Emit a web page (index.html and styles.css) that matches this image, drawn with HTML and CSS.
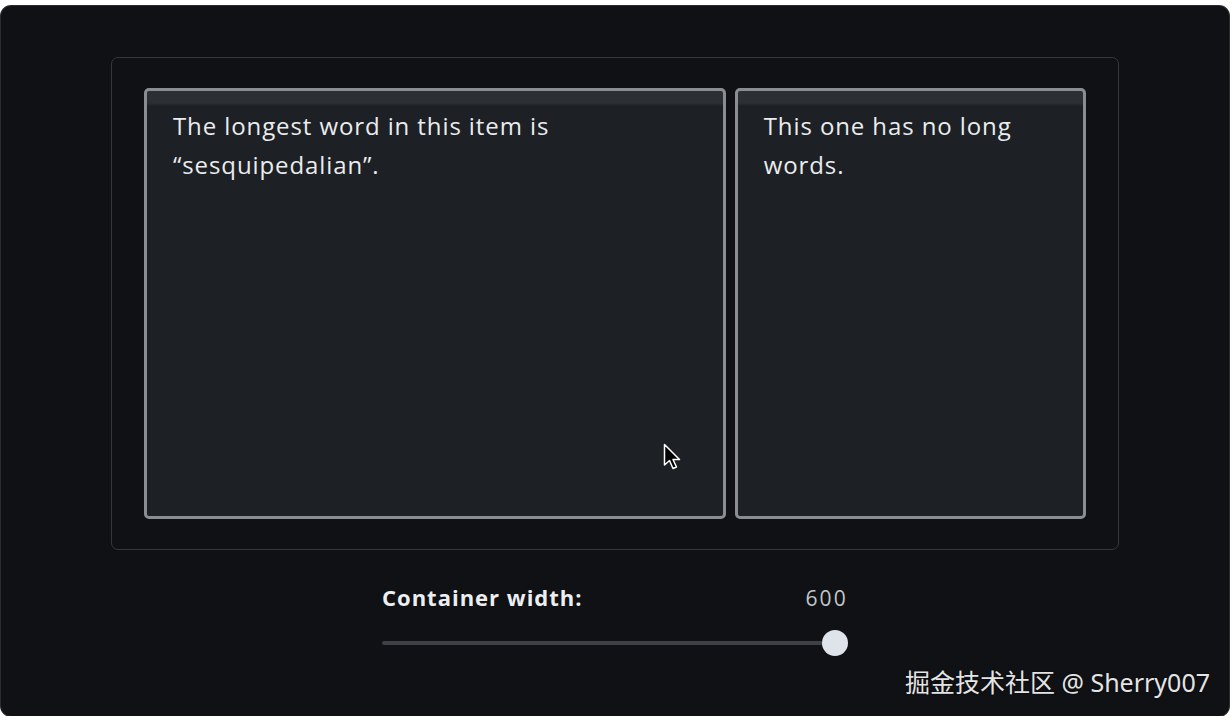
FILE: index.html
```html
<!DOCTYPE html>
<html lang="en">
<head>
    <meta charset="UTF-8">
    <meta name="viewport" content="width=device-width, initial-scale=1.0">
    <title>Container width demo</title>
    <link rel="stylesheet" href="styles.css">
</head>
<body>
    <div class="frame">
        <!-- Área de demonstração -->
        <div class="demo">
            <div class="item item-wide">
                <p>The longest word in this item is “sesquipedalian”.</p>
            </div>
            <div class="item item-narrow">
                <p>This one has no long words.</p>
            </div>
        </div>

        <div class="controls">
            <div class="control-head">
                <label for="width">Container width:</label>
                <span class="value">600</span>
            </div>
            <input type="range" id="width" min="200" max="600" value="600">
        </div>

        <svg class="cursor" width="20" height="30" viewBox="0 0 20 30">
            <path d="M1.5 1.5 L1.5 22 L6.5 17.5 L10 25.5 L13.5 24 L10 16.5 L16.5 16.5 Z" fill="#000" stroke="#fff" stroke-width="1.5" stroke-linejoin="round"/>
        </svg>

        <div class="watermark">掘金技术社区 @ Sherry007</div>
    </div>
</body>
</html>
```

FILE: styles.css
```css
body {
    margin: 0;
    background-color: #ffffff;
    font-family: "Open Sans", Lato, sans-serif;
}
.frame {
    position: relative;
    box-sizing: border-box;
    width: 1228px;
    height: 710px;
    margin: 6px 0 0 1px;
    padding-top: 51px;
    background-color: #0f1115;
    border-radius: 10px;
    box-shadow: 0 0 0 1px #2a2c30;
    display: flex;
    flex-direction: column;
    align-items: center;
}
.demo {
    box-sizing: border-box;
    width: 1008px;
    height: 493px;
    padding: 30px 32px;
    border: 1px solid #34373c;
    border-radius: 7px;
    display: flex;
    gap: 9px;
}
.item {
    box-sizing: border-box;
    height: 100%;
    border: 3px solid #8a8e93;
    border-radius: 5px;
    background: linear-gradient(#2c2f34 0, #2c2f34 12px, #1d2024 15px, #1d2024 100%);
    padding: 15px 26px;
    color: #eaecee;
    font-size: 24px;
    line-height: 39px;
    letter-spacing: 0.9px;
}
.item p {
    margin: 0;
}
.item-wide {
    width: 583px;
}
.item-narrow {
    width: 352px;
}
.controls {
    width: 466px;
    margin-top: 32px;
}
.control-head {
    display: flex;
    justify-content: space-between;
    align-items: baseline;
    color: #eceef0;
}
.control-head label {
    font-weight: bold;
    font-size: 22px;
    letter-spacing: 1px;
}
.control-head .value {
    font-size: 21px;
    color: #c3c6ca;
    letter-spacing: 2.2px;
}
input[type="range"] {
    -webkit-appearance: none;
    appearance: none;
    display: block;
    width: 466px;
    height: 26px;
    margin: 18px 0 0 0;
    background: transparent;
}
input[type="range"]::-webkit-slider-runnable-track {
    height: 4px;
    background-color: #3d4045;
    border-radius: 2px;
}
input[type="range"]::-webkit-slider-thumb {
    -webkit-appearance: none;
    width: 26px;
    height: 26px;
    margin-top: -11px;
    border-radius: 50%;
    background-color: #dfe3ea;
    border: none;
}
.cursor {
    position: absolute;
    left: 662px;
    top: 437px;
}
.watermark {
    position: absolute;
    right: 19px;
    bottom: 17px;
    font-family: "Noto Sans", "Noto Sans CJK SC", sans-serif;
    font-size: 25px;
    color: #e4e4e4;
    text-shadow: 0 0 2px rgba(0, 0, 0, 0.6);
}
```
